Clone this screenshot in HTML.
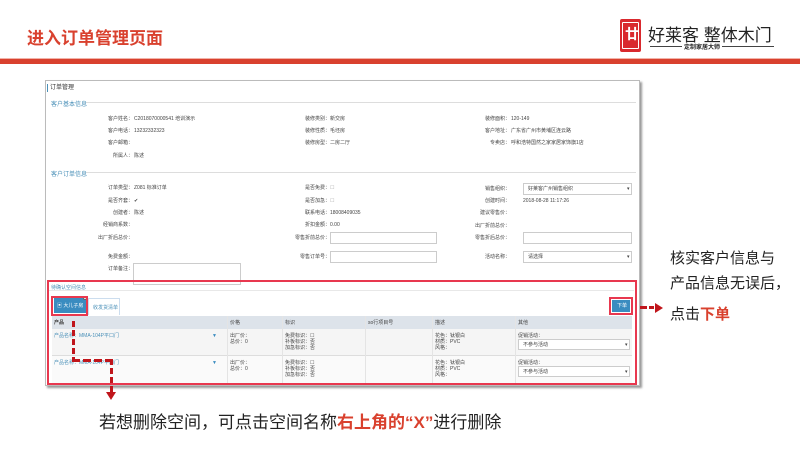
<!DOCTYPE html>
<html><head><meta charset="utf-8"><style>
*{margin:0;padding:0;box-sizing:border-box}
body{width:800px;height:450px;background:#fff;position:relative;overflow:hidden;font-family:"Liberation Sans","Noto Sans CJK SC",sans-serif;color:#222}
.a{position:absolute;white-space:nowrap}
.s{font-size:5px;color:#444;line-height:6px}
.r{text-align:right;width:90px}
.sec{font-size:6px;color:#4a90b8}
.inp{position:absolute;border:1px solid #ccc;background:#fff;height:12px}
.big{font-size:15px;color:#222}
</style></head><body>
<div class="a" style="left:27px;top:24px;font-size:17px;font-weight:bold;color:#d9412e">进入订单管理页面</div>
<div class="a" style="left:620px;top:19px;width:21px;height:33px;background:#d9292e;border-radius:2px"></div>
<div class="a" style="left:622px;top:22px;width:17px;height:27px;border:1px solid #fff;border-radius:1px"></div>
<div class="a" style="left:625px;top:24px;color:#fff;font-size:14px;font-weight:bold">廿</div>
<div class="a" style="left:648px;top:21px;font-size:17px;color:#222">好莱客 整体木门</div>
<div class="a" style="left:650px;top:46px;width:32px;height:1px;background:#444"></div>
<div class="a" style="left:684px;top:42px;font-size:6px;font-weight:bold;color:#222">定制家居大师</div>
<div class="a" style="left:722px;top:46px;width:52px;height:1px;background:#444"></div>
<div class="a" style="left:0;top:58px;width:800px;height:1px;background:#f2b2a8"></div>
<div class="a" style="left:0;top:59px;width:800px;height:5px;background:#d9412e"></div>

<div class="a" style="left:45px;top:80px;width:595px;height:306px;border:1px solid #bbb;box-shadow:2px 2px 2px #999;background:#fff"></div>
<div class="a" style="left:47px;top:84px;width:1px;height:8px;background:#4a90b8"></div>
<div class="a s" style="left:50px;top:85px;font-size:6px;color:#333">订单管理</div>
<div class="a sec" style="left:51px;top:99px">客户基本信息</div>
<div class="a" style="left:86px;top:102px;width:550px;height:1px;background:#ddd"></div>
<div class="a s r" style="left:43px;top:116px">客户姓名：</div><div class="a s" style="left:134px;top:116px">C2018070000541 培训演示</div>
<div class="a s r" style="left:43px;top:128px">客户电话：</div><div class="a s" style="left:134px;top:128px">13232332323</div>
<div class="a s r" style="left:43px;top:140px">客户邮箱：</div>
<div class="a s r" style="left:43px;top:153px">所属人：</div><div class="a s" style="left:134px;top:153px">陈述</div>
<div class="a s r" style="left:240px;top:116px">装修类别：</div><div class="a s" style="left:330px;top:116px">新交房</div>
<div class="a s r" style="left:240px;top:128px">装修性质：</div><div class="a s" style="left:330px;top:128px">毛坯房</div>
<div class="a s r" style="left:240px;top:140px">装修房型：</div><div class="a s" style="left:330px;top:140px">二房二厅</div>
<div class="a s r" style="left:420px;top:116px">装修面积：</div><div class="a s" style="left:511px;top:116px">120-149</div>
<div class="a s r" style="left:420px;top:128px">客户地址：</div><div class="a s" style="left:511px;top:128px">广东省广州市黄埔区连云路</div>
<div class="a s r" style="left:420px;top:140px">专卖店：</div><div class="a s" style="left:511px;top:140px">呼和浩特国然之家家居家饰旗1店</div>
<div class="a sec" style="left:51px;top:169px">客户订单信息</div>
<div class="a" style="left:86px;top:172px;width:550px;height:1px;background:#ddd"></div>
<div class="a s r" style="left:43px;top:185px">订单类型：</div><div class="a s" style="left:134px;top:185px">Z081 标准订单</div>
<div class="a s r" style="left:43px;top:198px">是否齐套：</div><div class="a s" style="left:134px;top:198px">✔</div>
<div class="a s r" style="left:43px;top:210px">创建者：</div><div class="a s" style="left:134px;top:210px">陈述</div>
<div class="a s r" style="left:43px;top:222px">经销商系数：</div>
<div class="a s r" style="left:43px;top:235px">出厂折后总价：</div>
<div class="a s r" style="left:43px;top:254px">免费金额：</div>
<div class="a s r" style="left:43px;top:266px">订单备注：</div>
<div class="inp" style="left:133px;top:263px;width:108px;height:22px"></div>
<div class="a s r" style="left:240px;top:185px">是否免费：</div><div class="a s" style="left:330px;top:185px;color:#aaa">☐</div>
<div class="a s r" style="left:240px;top:198px">是否加急：</div><div class="a s" style="left:330px;top:198px;color:#aaa">☐</div>
<div class="a s r" style="left:240px;top:210px">联系电话：</div><div class="a s" style="left:330px;top:210px">18008409035</div>
<div class="a s r" style="left:240px;top:222px">折扣金额：</div><div class="a s" style="left:330px;top:222px">0.00</div>
<div class="a s r" style="left:240px;top:235px">零售折前总价：</div><div class="inp" style="left:330px;top:232px;width:107px"></div>
<div class="a s r" style="left:240px;top:254px">零售订单号：</div><div class="inp" style="left:330px;top:251px;width:107px"></div>
<div class="a s r" style="left:420px;top:186px">销售组织：</div><div class="inp" style="left:523px;top:183px;width:109px"></div><div class="a s" style="left:528px;top:186px">好莱客广州销售组织</div><div class="a s" style="left:627px;top:186px">▾</div>
<div class="a s r" style="left:420px;top:198px">创建时间：</div><div class="a s" style="left:523px;top:198px">2018-08-28 11:17:26</div>
<div class="a s r" style="left:420px;top:210px">建议零售价：</div>
<div class="a s r" style="left:420px;top:223px">出厂折前总价：</div>
<div class="a s r" style="left:420px;top:235px">零售折后总价：</div><div class="inp" style="left:523px;top:232px;width:109px"></div>
<div class="a s r" style="left:420px;top:254px">活动名称：</div><div class="inp" style="left:523px;top:251px;width:109px"></div><div class="a s" style="left:528px;top:254px">请选择</div><div class="a s" style="left:627px;top:254px">▾</div>

<div class="a s" style="left:51px;top:285px;color:#4a90b8">待确认空间信息</div>
<div class="a" style="left:49px;top:290px;width:585px;height:1px;background:#e8e8e8"></div>
<div class="a" style="left:54px;top:298px;width:33px;height:15px;background:#3a8cc0"></div>
<div class="a s" style="left:57px;top:303px;color:#fff">▣ 大儿子房</div>
<div class="a" style="left:83px;top:296px;width:4px;height:4px;border-radius:2px;background:#fff;border:1px solid #666"></div>
<div class="a" style="left:88px;top:298px;width:32px;height:17px;border:1px solid #cde;border-bottom:none"></div>
<div class="a s" style="left:93px;top:305px;color:#4a90b8">收发货清单</div>
<div class="a" style="left:612px;top:300px;width:18px;height:12px;background:#3a8cc0"></div>
<div class="a s" style="left:617px;top:303px;color:#fff">下单</div>
<div class="a" style="left:52px;top:316px;width:580px;height:13px;background:#dde3ea"></div>
<div class="a s" style="left:54px;top:320px;font-weight:bold">产品</div>
<div class="a s" style="left:230px;top:320px">价格</div>
<div class="a s" style="left:285px;top:320px">标识</div>
<div class="a s" style="left:368px;top:320px">so行项目号</div>
<div class="a s" style="left:435px;top:320px">描述</div>
<div class="a s" style="left:518px;top:320px">其他</div>
<div class="a" style="left:52px;top:329px;width:580px;height:27px;background:#f5f5f5;border-bottom:1px solid #ddd"></div>
<div class="a" style="left:52px;top:356px;width:580px;height:27px;background:#fafafa"></div>
<div class="a" style="left:227px;top:316px;width:1px;height:67px;background:#e4e4e4"></div>
<div class="a" style="left:282px;top:316px;width:1px;height:67px;background:#e4e4e4"></div>
<div class="a" style="left:365px;top:316px;width:1px;height:67px;background:#e4e4e4"></div>
<div class="a" style="left:432px;top:316px;width:1px;height:67px;background:#e4e4e4"></div>
<div class="a" style="left:515px;top:316px;width:1px;height:67px;background:#e4e4e4"></div>
<div class="a s" style="left:54px;top:333px;color:#4a90b8">产品名称：MMA-104P平口门</div>
<div class="a s" style="left:54px;top:360px;color:#4a90b8">产品名称：MMA-104P平口门</div>
<div class="a s" style="left:212px;top:333px;color:#3a8cc0">▼</div><div class="a s" style="left:212px;top:360px;color:#3a8cc0">▼</div>
<div class="a s" style="left:230px;top:333px">出厂价：<br>总价：0</div>
<div class="a s" style="left:230px;top:360px">出厂价：<br>总价：0</div>
<div class="a s" style="left:285px;top:333px">免费标识：☐<br>补板标识：否<br>加急标识：否</div>
<div class="a s" style="left:285px;top:360px">免费标识：☐<br>补板标识：否<br>加急标识：否</div>
<div class="a s" style="left:435px;top:333px">花色：钛银白<br>材质：PVC<br>风格：</div>
<div class="a s" style="left:435px;top:360px">花色：钛银白<br>材质：PVC<br>风格：</div>
<div class="a s" style="left:518px;top:333px">促销活动：</div><div class="inp" style="left:518px;top:339px;width:112px;height:11px"></div><div class="a s" style="left:523px;top:342px">不参与活动</div><div class="a s" style="left:625px;top:342px">▾</div>
<div class="a s" style="left:518px;top:360px">促销活动：</div><div class="inp" style="left:518px;top:366px;width:112px;height:11px"></div><div class="a s" style="left:523px;top:369px">不参与活动</div><div class="a s" style="left:625px;top:369px">▾</div>

<div class="a" style="left:47px;top:280px;width:590px;height:105px;border:2px solid #e8384f"></div>
<div class="a" style="left:51px;top:296px;width:37px;height:20px;border:2px solid #e8384f"></div>
<div class="a" style="left:609px;top:297px;width:24px;height:18px;border:2px solid #e8384f"></div>
<div class="a" style="left:72px;top:321px;width:3px;height:40px;background:repeating-linear-gradient(#c0151b 0 6px,transparent 6px 9px)"></div>
<div class="a" style="left:72px;top:359px;width:42px;height:3px;background:repeating-linear-gradient(90deg,#c0151b 0 8px,transparent 8px 11px)"></div>
<div class="a" style="left:110px;top:359px;width:3px;height:33px;background:repeating-linear-gradient(#c0151b 0 6px,transparent 6px 9px)"></div>
<div class="a" style="left:106px;top:392px;width:0;height:0;border-left:5px solid transparent;border-right:5px solid transparent;border-top:8px solid #c0151b"></div>
<div class="a" style="left:640px;top:306px;width:14px;height:3px;background:repeating-linear-gradient(90deg,#c0151b 0 7px,transparent 7px 9px)"></div>
<div class="a" style="left:655px;top:303px;width:0;height:0;border-top:5px solid transparent;border-bottom:5px solid transparent;border-left:8px solid #c0151b"></div>

<div class="a big" style="left:670px;top:247px">核实客户信息与</div>
<div class="a big" style="left:670px;top:272px">产品信息无误后，</div>
<div class="a big" style="left:670px;top:303px">点击<b style="color:#d9412e">下单</b></div>
<div class="a big" style="left:99px;top:408px;font-size:17px">若想删除空间，可点击空间名称<b style="color:#d9412e">右上角的“X”</b>进行删除</div>
</body></html>
